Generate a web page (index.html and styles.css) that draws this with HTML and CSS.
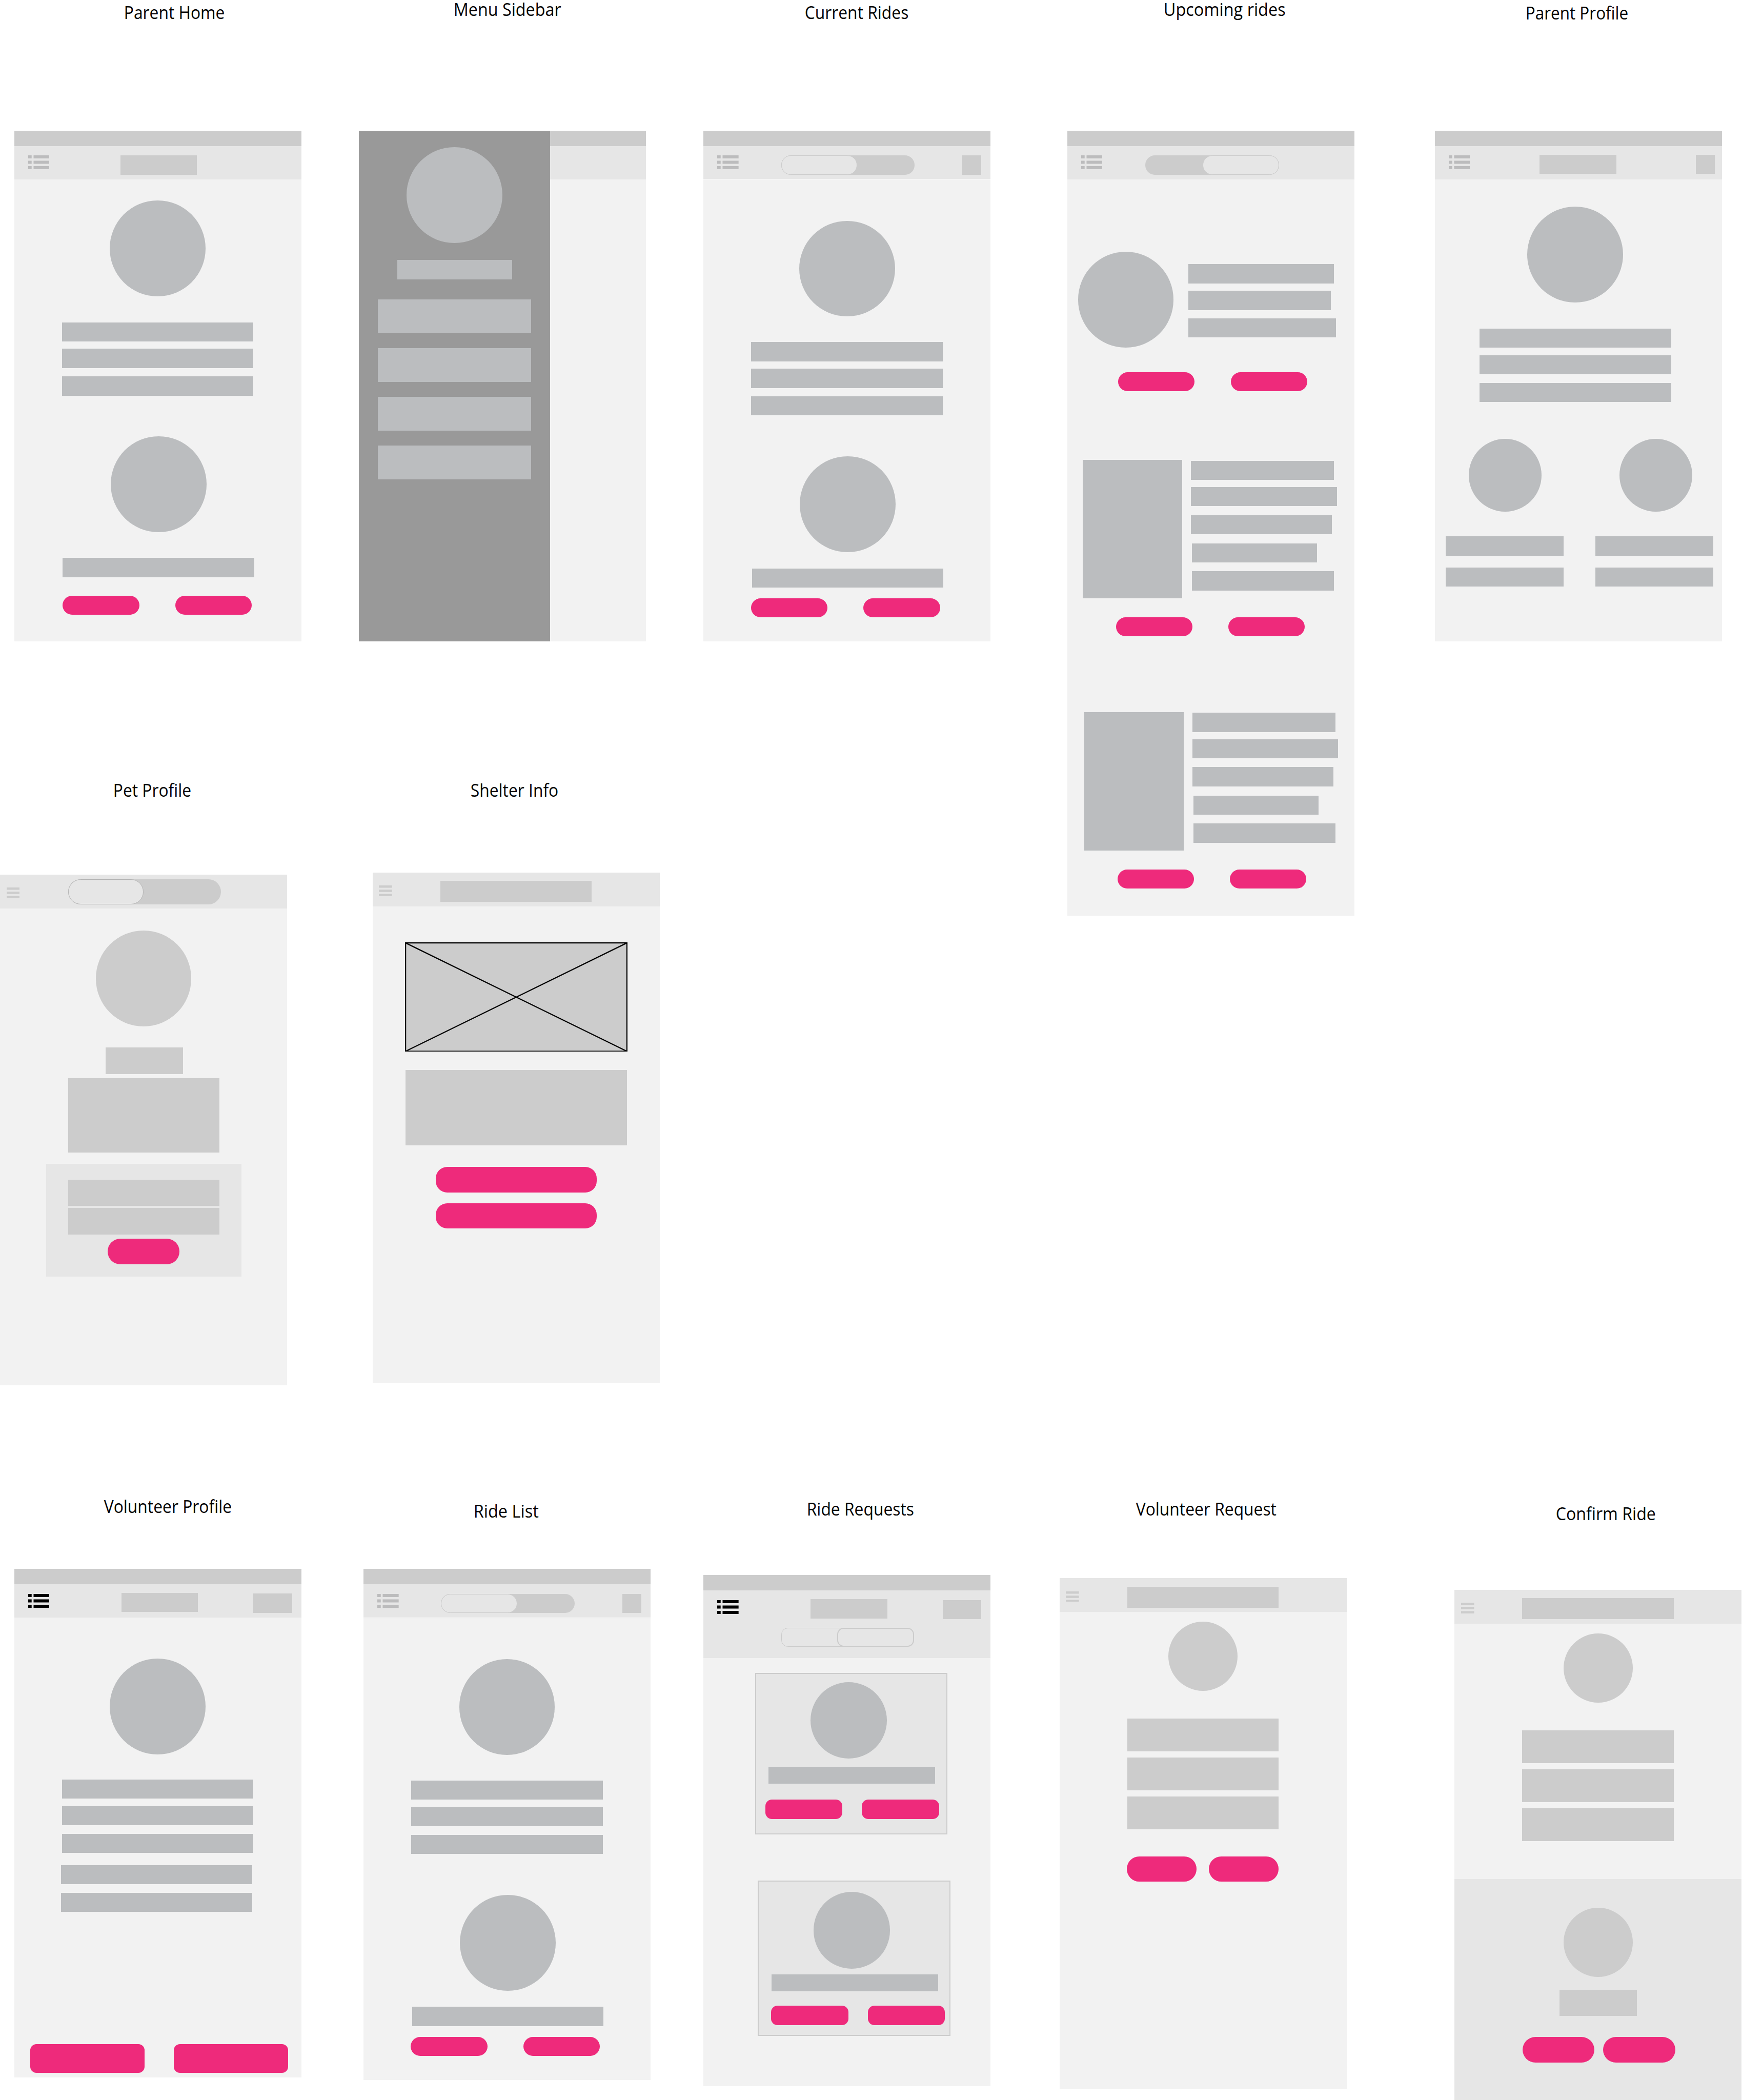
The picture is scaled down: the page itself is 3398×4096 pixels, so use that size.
FILE: index.html
```html
<!DOCTYPE html>
<html lang="en">
<head>
<meta charset="utf-8">
<title>Pet ride wireframes</title>
<link rel="stylesheet" href="styles.css">
</head>
<body>
<svg class="defs" aria-hidden="true">
  <symbol id="list" viewBox="0 0 56 36"><path d="M0 0h9v8H0zM14 0h42v8H14zM0 14h9v8H0zM14 14h42v8H14zM0 28h9v8H0zM14 28h42v8H14z"/></symbol>
  <symbol id="burger" viewBox="0 0 34.5 28"><path d="M0 0h34.5v6H0zM0 11h34.5v6H0zM0 22h34.5v6H0z"/></symbol>
</svg>
<main class="board">

<section class="row row-parent">
  <article class="artboard parent-home">
    <header class="caption"><h2>Parent Home</h2></header>
    <div class="screen">
      <div class="status"></div>
      <div class="bar"><svg class="list"><use href="#list"/></svg><div class="heading"></div></div>
      <div class="avatar first"></div>
      <div class="lines"><div class="line"></div><div class="line"></div><div class="line"></div></div>
      <div class="avatar second"></div>
      <div class="line name"></div>
      <div class="actions"><div class="button"></div><div class="button"></div></div>
    </div>
  </article>

  <article class="artboard menu">
    <header class="caption"><h2>Menu Sidebar</h2></header>
    <div class="screen">
      <nav class="sidebar">
        <div class="avatar"></div>
        <div class="user"></div>
        <div class="item"></div><div class="item"></div><div class="item"></div><div class="item"></div>
      </nav>
      <div class="behind"><div class="status"></div><div class="bar"></div></div>
    </div>
  </article>

  <article class="artboard rides current">
    <header class="caption"><h2>Current Rides</h2></header>
    <div class="screen">
      <div class="status"></div>
      <div class="bar ruled"><svg class="list"><use href="#list"/></svg><div class="toggle"><div class="thumb"></div></div><div class="square"></div></div>
      <div class="avatar first"></div>
      <div class="lines"><div class="line"></div><div class="line"></div><div class="line"></div></div>
      <div class="avatar second"></div>
      <div class="line name"></div>
      <div class="actions"><div class="button"></div><div class="button"></div></div>
    </div>
  </article>

  <article class="artboard upcoming">
    <header class="caption"><h2>Upcoming rides</h2></header>
    <div class="screen">
      <div class="status"></div>
      <div class="bar"><svg class="list"><use href="#list"/></svg><div class="toggle right"><div class="thumb"></div></div></div>
      <div class="ride rider">
        <div class="avatar"></div>
        <div class="lines"><div class="line"></div><div class="line"></div><div class="line"></div></div>
      </div>
      <div class="actions"><div class="button"></div><div class="button"></div></div>
      <div class="ride trip">
        <div class="photo"></div>
        <div class="lines"><div class="line"></div><div class="line"></div><div class="line"></div><div class="line"></div><div class="line"></div></div>
      </div>
      <div class="actions trip-actions"><div class="button"></div><div class="button"></div></div>
      <div class="ride trip last">
        <div class="photo"></div>
        <div class="lines"><div class="line"></div><div class="line"></div><div class="line"></div><div class="line"></div><div class="line"></div></div>
      </div>
      <div class="actions last-actions"><div class="button"></div><div class="button"></div></div>
    </div>
  </article>

  <article class="artboard parent-profile">
    <header class="caption"><h2>Parent Profile</h2></header>
    <div class="screen">
      <div class="status"></div>
      <div class="bar"><svg class="list"><use href="#list"/></svg><div class="heading"></div><div class="square"></div></div>
      <div class="avatar"></div>
      <div class="lines"><div class="line"></div><div class="line"></div><div class="line"></div></div>
      <div class="pets">
        <div class="pet"><div class="pet-avatar"></div><div class="line"></div><div class="line"></div></div>
        <div class="pet"><div class="pet-avatar"></div><div class="line"></div><div class="line"></div></div>
      </div>
    </div>
  </article>
</section>

<section class="row row-info">
  <article class="artboard pet-profile">
    <header class="caption"><h2>Pet Profile</h2></header>
    <div class="screen light">
      <div class="bar"><svg class="burger"><use href="#burger"/></svg><div class="toggle"><div class="thumb"></div></div></div>
      <div class="avatar"></div>
      <div class="name-box"></div>
      <div class="about"></div>
      <div class="card"><div class="field"></div><div class="field"></div><div class="button"></div></div>
    </div>
  </article>

  <article class="artboard shelter">
    <header class="caption"><h2>Shelter Info</h2></header>
    <div class="screen light">
      <div class="bar"><svg class="burger"><use href="#burger"/></svg><div class="heading"></div></div>
      <svg class="image" viewBox="0 0 581 286"><rect x="1.5" y="1.5" width="578" height="283"/><path d="M1.5 1.5l578 283M579.5 1.5l-578 283"/></svg>
      <div class="about"></div>
      <div class="button"></div>
      <div class="button"></div>
    </div>
  </article>
</section>

<section class="row row-volunteer">
  <article class="artboard volunteer-profile">
    <header class="caption"><h2>Volunteer Profile</h2></header>
    <div class="screen">
      <div class="status"></div>
      <div class="bar"><svg class="list dark"><use href="#list"/></svg><div class="heading"></div><div class="tag"></div></div>
      <div class="avatar"></div>
      <div class="lines"><div class="line"></div><div class="line"></div><div class="line"></div></div>
      <div class="lines more"><div class="line"></div><div class="line"></div></div>
      <div class="actions"><div class="button"></div><div class="button"></div></div>
    </div>
  </article>

  <article class="artboard rides ride-list">
    <header class="caption"><h2>Ride List</h2></header>
    <div class="screen">
      <div class="status"></div>
      <div class="bar ruled"><svg class="list"><use href="#list"/></svg><div class="toggle"><div class="thumb"></div></div><div class="square"></div></div>
      <div class="avatar first"></div>
      <div class="lines"><div class="line"></div><div class="line"></div><div class="line"></div></div>
      <div class="avatar second"></div>
      <div class="line name"></div>
      <div class="actions"><div class="button"></div><div class="button"></div></div>
    </div>
  </article>

  <article class="artboard requests">
    <header class="caption"><h2>Ride Requests</h2></header>
    <div class="screen">
      <div class="status"></div>
      <div class="bar"><svg class="list dark"><use href="#list"/></svg><div class="heading"></div><div class="tag"></div></div>
      <div class="tabs"><div class="tab"></div><div class="tab active"></div></div>
      <div class="card">
        <div class="avatar"></div>
        <div class="line"></div>
        <div class="actions"><div class="button"></div><div class="button"></div></div>
      </div>
      <div class="card second">
        <div class="avatar"></div>
        <div class="line"></div>
        <div class="actions"><div class="button"></div><div class="button"></div></div>
      </div>
    </div>
  </article>

  <article class="artboard volunteer-request">
    <header class="caption"><h2>Volunteer Request</h2></header>
    <div class="screen light">
      <div class="bar"><svg class="burger"><use href="#burger"/></svg><div class="heading"></div></div>
      <div class="avatar"></div>
      <div class="fields"><div class="field"></div><div class="field"></div><div class="field"></div></div>
      <div class="actions"><div class="button"></div><div class="button"></div></div>
    </div>
  </article>

  <article class="artboard confirm">
    <header class="caption"><h2>Confirm Ride</h2></header>
    <div class="screen light">
      <div class="bar"><svg class="burger"><use href="#burger"/></svg><div class="heading"></div></div>
      <div class="avatar"></div>
      <div class="fields"><div class="field"></div><div class="field"></div><div class="field"></div></div>
      <div class="panel">
        <div class="avatar"></div>
        <div class="name-box"></div>
        <div class="actions"><div class="button"></div><div class="button"></div></div>
      </div>
    </div>
  </article>
</section>

</main>
</body>
</html>
```
FILE: styles.css
```css
/* 1rem = 10 artboard units */
:root {
  font-size: 7.4695px;
  --page: #f2f2f2;
  --bar: #e6e6e6;
  --block: #cccccc;
  --content: #bbbdbf;
  --accent: #ee2a7b;
}

* { box-sizing: border-box; }

body { margin: 0; background: #fff; }

.defs { display: none; }

.board {
  display: flex;
  flex-direction: column;
  width: 3398px;
  height: 4096px;
  overflow: hidden;
}

/* Rows and artboards */
.row { display: flex; align-items: flex-start; flex: none; }
.row-parent { height: 200rem; }
.row-info { height: 190rem; }
.row-volunteer { height: 158.4rem; }

.artboard { flex: none; width: 75rem; --stretch: .94; }
.menu { --stretch: .955; }
.upcoming, .ride-list { --stretch: .96; }
.confirm { --stretch: .95; }
.parent-profile { --stretch: .93; }

h2 {
  margin: 0;
  font: 400 4.53rem/4rem "Open Sans", "Noto Sans", sans-serif;
  color: #000;
  white-space: nowrap;
  transform: translate(.1rem, .12rem) scaleX(var(--stretch));
  transform-origin: 0 0;
}

.parent-home { margin-left: 3.7rem; }
.menu, .current { margin-left: 15rem; }
.upcoming { margin-left: 20rem; }
.parent-profile { margin-left: 21rem; }
.shelter { margin-left: 22.3rem; }
.volunteer-profile { margin-left: 3.7rem; }
.ride-list { margin-left: 16.2rem; }
.requests { margin-left: 13.8rem; }
.volunteer-request { margin-left: 18rem; }
.confirm { margin-left: 28.15rem; }

.caption { height: 34.1rem; }
.parent-home .caption { padding: 1.2rem 0 0 28.5rem; }
.menu .caption { padding: .35rem 0 0 24.65rem; }
.current .caption { padding: 1.15rem 0 0 26.4rem; }
.upcoming .caption { padding: .4rem 0 0 25.1rem; }
.parent-profile .caption { padding: 1.35rem 0 0 23.6rem; }
.pet-profile .caption { height: 28.4rem; padding: 4.35rem 0 0 29.45rem; }
.shelter .caption { height: 27.85rem; padding: 4.35rem 0 0 25.5rem; }
.volunteer-profile .caption { height: 19.7rem; padding: 1.35rem 0 0 23.4rem; }
.ride-list .caption { height: 19.7rem; padding: 2.55rem 0 0 28.65rem; }
.requests .caption { height: 21.3rem; padding: 1.95rem 0 0 26.85rem; }
.volunteer-request .caption { height: 22.1rem; padding: 1.95rem 0 0 19.8rem; }
.confirm .caption { height: 25.15rem; padding: 3.15rem 0 0 26.3rem; }

/* Shared pieces */
.screen {
  display: flex;
  flex-direction: column;
  align-items: flex-start;
  height: 133.4rem;
  background: var(--page);
}
.screen > *, .sidebar > *, .card > *, .panel > * { flex: none; }

.status { width: 100%; height: 4rem; background: var(--block); }
.bar {
  display: flex;
  align-items: flex-start;
  width: 100%;
  height: 8.8rem;
  background: var(--bar);
}
.bar.ruled { border-bottom: 1px solid #fafafa; }
.bar > * { flex: none; }

.list { width: 5.6rem; height: 3.6rem; margin: 2.5rem 0 0 3.6rem; fill: #bcbcbd; }
.list.dark { fill: #000; }
.burger { width: 3.45rem; height: 2.8rem; margin: 3.4rem 0 0 1.7rem; fill: var(--block); }

.heading { width: 20rem; height: 5rem; background: var(--block); }
.square { width: 5rem; height: 5rem; background: var(--block); }
.tag { width: 10.1rem; height: 5rem; background: var(--block); }
.light .heading { width: 39.55rem; height: 5.5rem; margin: 2.2rem 0 0 12.55rem; }

.toggle { display: flex; width: 34.9rem; height: 5rem; border-radius: 2.5rem; background: var(--block); }
.toggle.right { justify-content: flex-end; }
.thumb { width: 19.9rem; height: 5rem; border: 1px solid var(--block); border-radius: 2.5rem; background: var(--bar); }

.avatar { width: 25rem; height: 25rem; border-radius: 50%; background: var(--content); }
.line { width: 50rem; height: 5rem; background: var(--content); }
.lines { display: flex; flex-direction: column; }
.lines .line:nth-child(2) { margin-top: 1.95rem; }
.lines .line:nth-child(3) { margin-top: 2.2rem; }

.actions { display: flex; gap: 9.4rem; }
.button { width: 20rem; height: 5rem; border-radius: 2.5rem; background: var(--accent); }

.light .avatar, .light .field, .name-box, .about { background: var(--block); }

/* Parent home */
.parent-home .heading { margin: 2.5rem 0 0 18.5rem; }
.parent-home .first { margin: 5.5rem 0 0 25rem; }
.parent-home .lines { margin: 6.75rem 0 0 12.5rem; }
.parent-home .second { margin: 10.7rem 0 0 25.2rem; }
.parent-home .name { margin: 6.7rem 0 0 12.7rem; }
.parent-home .actions { margin: 4.85rem 0 0 12.7rem; }

/* Menu sidebar */
.menu .screen { flex-direction: row; }
.sidebar { display: flex; flex-direction: column; align-items: center; width: 50rem; height: 100%; padding-top: 4.3rem; background: #999; }
.behind { width: 25rem; }
.user { width: 30rem; height: 5rem; margin: 4.5rem 0 5.3rem; background: var(--content); }
.item { width: 40rem; height: 8.8rem; margin-bottom: 3.92rem; background: var(--content); }

/* Current rides and ride list */
.rides .toggle { margin: 2.5rem 0 0 11.1rem; }
.rides .square { margin: 2.5rem 0 0 12.4rem; }
.rides .first { margin: 10.75rem 0 0 25rem; }
.rides .lines { margin: 6.7rem 0 0 12.5rem; }
.rides .second { margin: 10.7rem 0 0 25.2rem; }
.rides .name { margin: 4.25rem 0 0 12.7rem; }
.rides .actions { margin: 2.8rem 0 0 12.4rem; }

/* Upcoming rides */
.upcoming .screen { height: 205rem; }
.upcoming .toggle { margin: 2.5rem 0 0 11.2rem; }
.ride { display: flex; align-items: flex-start; }
.rider { margin: 18.9rem 0 0 2.8rem; }
.rider .lines { margin: 3.2rem 0 0 3.9rem; }
.rider .line:nth-child(1) { width: 37.9rem; }
.rider .line:nth-child(2) { width: 37.2rem; }
.rider .line:nth-child(3) { width: 38.5rem; }
.photo { width: 26rem; height: 36.1rem; background: var(--content); }
.trip { margin: 17.95rem 0 0 4rem; }
.trip .lines { margin: .15rem 0 0 2.3rem; }
.trip .line:nth-child(1) { width: 37.3rem; }
.trip .line:nth-child(2) { width: 38.1rem; margin-top: 1.9rem; }
.trip .line:nth-child(3) { width: 36.8rem; margin-top: 2.3rem; }
.trip .line:nth-child(4) { width: 32.6rem; margin: 2.4rem 0 0 .3rem; }
.trip .line:nth-child(5) { width: 37.1rem; margin: 2.3rem 0 0 .3rem; }
.trip.last { margin: 19.8rem 0 0 4.4rem; }
.upcoming .actions { margin: 6.4rem 0 0 13.3rem; }
.upcoming .trip-actions { margin: 4.95rem 0 0 12.7rem; }
.upcoming .last-actions { margin: 4.95rem 0 0 13.1rem; }

/* Parent profile */
.parent-profile .heading { margin: 2.3rem 0 0 18.2rem; }
.parent-profile .square { margin: 2.3rem 0 0 20.8rem; }
.parent-profile .avatar { margin: 7.1rem 0 0 24.2rem; }
.parent-profile .lines { margin: 6.8rem 0 0 11.7rem; }
.pets { display: flex; gap: 8.3rem; margin: 9.65rem 0 0 2.8rem; }
.pet-avatar { width: 19rem; height: 19rem; margin: 0 0 6.5rem 6.1rem; border-radius: 50%; background: var(--content); }
.pet:last-child .pet-avatar { margin-left: 6.3rem; }
.pet .line { width: 30.8rem; }
.pet .line + .line { margin-top: 3.05rem; }

/* Pet profile */
.pet-profile .toggle { width: 40rem; height: 6.55rem; margin: 1.2rem 0 0 12.6rem; border-radius: 3.3rem; }
.pet-profile .thumb { width: 19.8rem; height: 6.55rem; border-color: #b3b3b3; border-radius: 3.3rem; }
.pet-profile .avatar { margin: 5.8rem 0 0 25rem; }
.name-box { width: 20.2rem; height: 6.9rem; }
.pet-profile .name-box { margin: 5.55rem 0 0 27.6rem; }
.pet-profile .about { width: 39.5rem; height: 19.3rem; margin: 1.15rem 0 0 17.75rem; }
.pet-profile .card { display: flex; flex-direction: column; align-items: center; width: 51.1rem; height: 29.5rem; margin: 3rem 0 0 12rem; padding-top: 4.1rem; background: var(--bar); }
.pet-profile .field { width: 39.5rem; height: 6.9rem; margin-bottom: .55rem; }
.pet-profile .button { width: 18.75rem; height: 6.7rem; margin-top: .6rem; border-radius: 3.3rem; }

/* Shelter info */
.shelter .screen { height: 133.2rem; }
.image { width: 58.1rem; height: 28.6rem; margin: 9.4rem 0 0 8.5rem; fill: var(--block); stroke: #000; stroke-width: 3; }
.shelter .about { width: 57.9rem; height: 19.8rem; margin: 4.7rem 0 0 8.6rem; }
.shelter .button { width: 42.05rem; height: 6.6rem; margin: 5.6rem 0 0 16.45rem; border-radius: 3rem; }
.shelter .button + .button { margin-top: 2.85rem; }

/* Volunteer profile */
.volunteer-profile .screen { height: 132.8rem; }
.volunteer-profile .bar { height: 8.7rem; }
.volunteer-profile .heading { margin: 2.25rem 0 0 18.8rem; }
.volunteer-profile .tag { margin: 2.45rem 0 0 14.5rem; }
.volunteer-profile .avatar { margin: 10.7rem 0 0 25rem; }
.volunteer-profile .lines { margin: 6.6rem 0 0 12.5rem; }
.volunteer-profile .more { margin: 3.2rem 0 0 12.2rem; }
.volunteer-profile .more .line:nth-child(2) { margin-top: 2.2rem; }
.volunteer-profile .actions { gap: 7.6rem; margin: 34.5rem 0 0 4.15rem; }
.volunteer-profile .button { width: 29.9rem; height: 7.5rem; border-radius: 1.6rem; }

/* Ride requests */
.requests .heading { margin: 2.3rem 0 0 18.8rem; }
.requests .tag { margin: 2.5rem 0 0 14.5rem; }
.tabs { display: flex; width: 100%; height: 8.8rem; padding: .9rem 0 0 20.3rem; background: var(--bar); }
.tab { width: 19.9rem; height: 5rem; border: 1px solid var(--block); border-radius: 1.7rem; background: var(--bar); }
.tab.active { width: 20.05rem; margin: .05rem 0 0 -5.3rem; border-width: .4rem; }
.requests .card { display: flex; flex-direction: column; align-items: flex-start; width: 50.3rem; height: 42.1rem; margin: 4rem 0 0 13.45rem; border: .3rem solid var(--block); background: var(--bar); }
.requests .avatar { width: 20rem; height: 20rem; margin: 2.1rem 0 0 14.25rem; }
.requests .line { width: 43.55rem; height: 4.4rem; margin: 2.1rem 0 0 3.3rem; }
.requests .actions { gap: 5.1rem; margin: 4.2rem 0 0 2.5rem; }
.requests .button { width: 20.1rem; height: 5.05rem; border-radius: 1.7rem; }
.requests .second { height: 40.6rem; margin: 12.1rem 0 0 14.2rem; }
.requests .second .avatar { margin: 2.7rem 0 0 14.3rem; }
.requests .second .line { margin: 1.5rem 0 0 3.3rem; }
.requests .second .actions { margin: 3.8rem 0 0 3.25rem; }

/* Volunteer request and confirm ride */
.volunteer-request .avatar, .confirm .avatar { width: 18.1rem; height: 18.1rem; margin: 2.6rem 0 0 28.45rem; }
.fields { display: flex; flex-direction: column; gap: 1.65rem; margin: 7.15rem 0 0 17.7rem; }
.fields .field { width: 39.55rem; height: 8.55rem; }
.volunteer-request .actions { gap: 3.2rem; margin: 7.15rem 0 0 17.6rem; }
.volunteer-request .button { width: 18.2rem; height: 6.5rem; border-radius: 3.25rem; }
.panel { display: flex; flex-direction: column; align-items: flex-start; width: 100%; height: 57.9rem; margin-top: 9.95rem; background: var(--bar); }
.confirm .panel .avatar { margin-top: 7.45rem; }
.panel .name-box { margin: 3.3rem 0 0 27.45rem; }
.panel .actions { gap: 2.3rem; margin: 5.45rem 0 0 17.75rem; }
.panel .button { width: 18.8rem; height: 6.7rem; border-radius: 3.35rem; }
```
